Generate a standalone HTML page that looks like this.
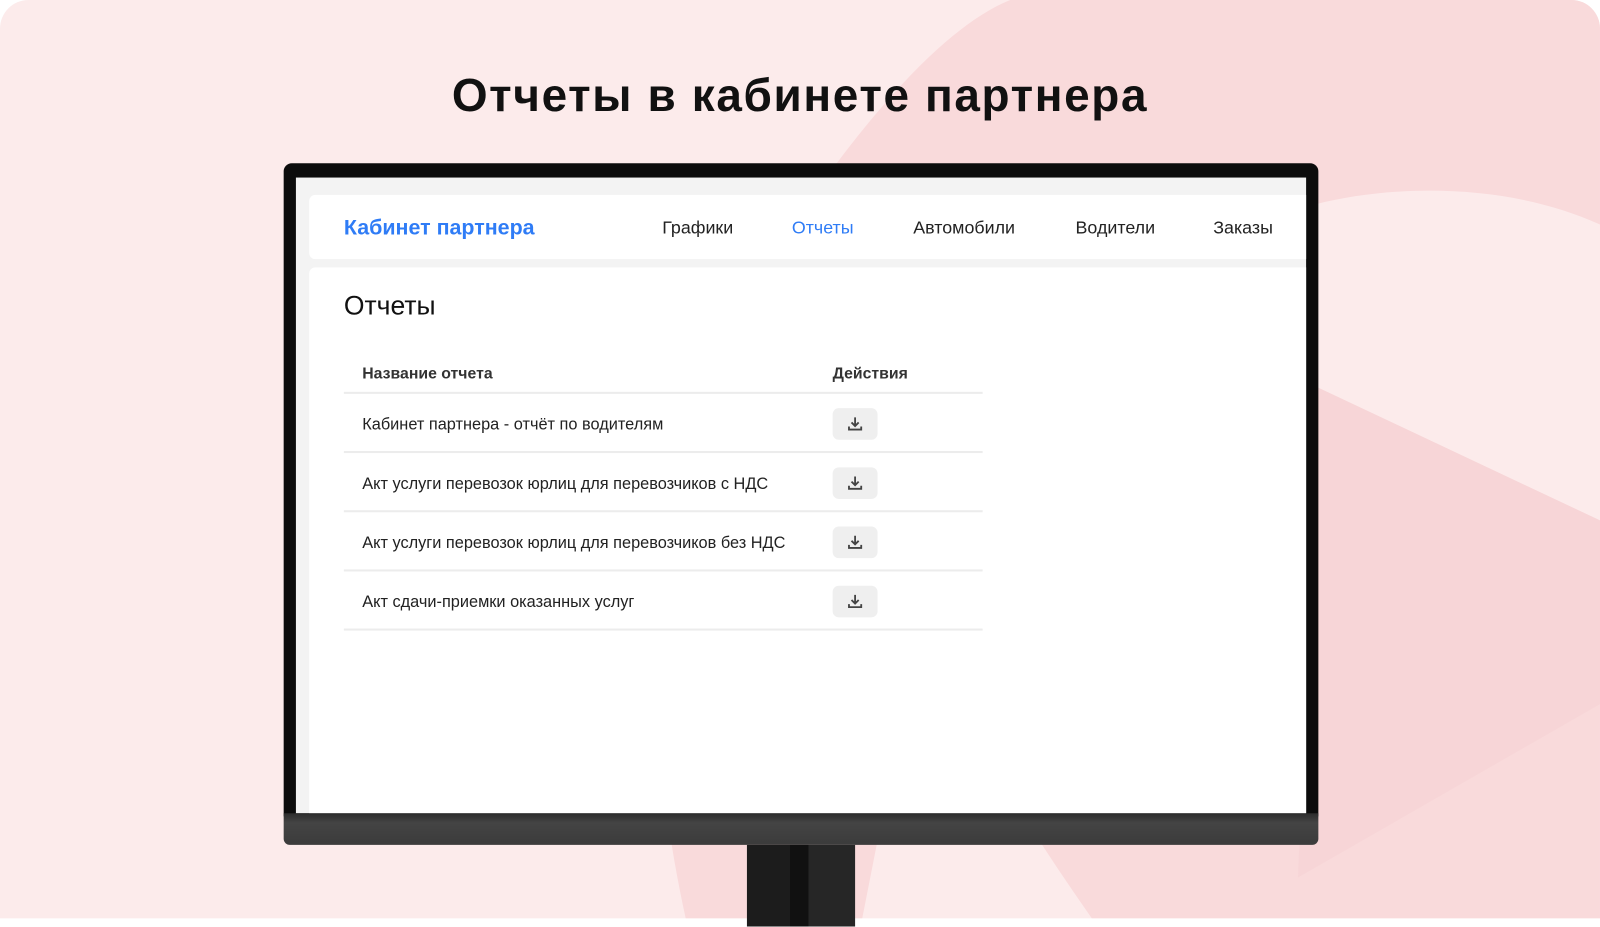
<!DOCTYPE html>
<html><head><meta charset="utf-8"><style>
*{margin:0;padding:0;box-sizing:border-box}
body{width:1600px;height:899px;background:#fff;overflow:hidden;font-family:"Liberation Sans",Arial,sans-serif;position:relative}
.wrap{position:absolute;left:0;top:0;width:1568px;height:881px;transform:scale(1.0204);transform-origin:0 0}
.bg{position:absolute;left:0;top:0;width:1568px;height:900px;border-radius:28px 28px 0 0;background:#fcebeb;overflow:hidden}
h1{position:absolute;top:68px;left:0;width:1568px;text-align:center;font-size:45px;font-weight:bold;color:#111;letter-spacing:1.6px}
.bezel{position:absolute;left:278px;top:160px;width:1014px;height:640px;background:#0c0c0c;border-radius:8px 8px 0 0}
.screen{position:absolute;left:290px;top:174px;width:990px;height:623px;background:#f3f3f3}
.chin{position:absolute;left:278px;top:797px;width:1014px;height:31px;background:linear-gradient(#2c2c2c,#444 30%,#3b3b3b);border-radius:0 0 6px 6px}
.stand{position:absolute;left:732px;top:828px;width:106px;height:80px;background:linear-gradient(90deg,#1c1c1c 0,#1c1c1c 40%,#111 40%,#111 57%,#262626 57%)}
.hdr{position:absolute;left:303px;top:191px;width:977px;height:63px;background:#fff;border-radius:6px 0 0 6px}
.logo{position:absolute;left:34px;top:21px;color:#2f7cf6;font-size:21px;font-weight:bold}
.nav{position:absolute;top:22px;font-size:17.5px;color:#222}
.card{position:absolute;left:303px;top:262px;width:977px;height:535px;background:#fff;border-radius:6px 0 0 0}
.ct{position:absolute;left:34px;top:22px;font-size:26px;color:#111}
.tbl{position:absolute;left:34px;top:86px;width:626px}
.row{height:58px;border-bottom:2px solid #ececec;position:relative;font-size:16px;color:#222}
.row.h{height:38px;font-weight:bold;color:#333;font-size:15.5px}
.row span{position:absolute;left:18px;top:22px}
.row.h span{top:10px}
.row .a{left:479px}
.btn{position:absolute;left:479px;top:14px;width:44px;height:31px;background:#efefef;border-radius:6px}
.btn svg{position:absolute;left:14px;top:7px}
</style></head><body>
<div class="wrap">
<div class="bg">
<svg width="1568" height="900" style="position:absolute;left:0;top:0">
<path d="M820 160 C880 80 940 20 990 0 L1568 0 L1568 220 C1480 180 1370 180 1290 200 L1292 380 L1568 510 L1568 900 L1070 900 C1000 800 940 700 900 620 L845 900 L672 900 C650 800 640 700 640 560 Z" fill="#f9dadb"/>
<path d="M1292 380 L1568 510 L1568 690 L1272 860 Z" fill="#f7d3d5" opacity="0.7"/>
</svg>
</div>
<h1>Отчеты в кабинете партнера</h1>
<div class="bezel"></div>
<div class="screen"></div>
<div class="hdr">
<div class="logo">Кабинет партнера</div>
<div class="nav" style="left:346px">Графики</div>
<div class="nav" style="left:473px;color:#2f7cf6">Отчеты</div>
<div class="nav" style="left:592px">Автомобили</div>
<div class="nav" style="left:751px">Водители</div>
<div class="nav" style="left:886px">Заказы</div>
</div>
<div class="card">
<div class="ct">Отчеты</div>
<div class="tbl">
<div class="row h"><span>Название отчета</span><span class="a">Действия</span></div>
<div class="row"><span>Кабинет партнера - отчёт по водителям</span><div class="btn"><svg width="16" height="16" viewBox="0 0 16 16"><path d="M8 2v8M4.5 7l3.5 3.5L11.5 7M2 11v3h12v-3" fill="none" stroke="#444" stroke-width="1.8"/></svg></div></div>
<div class="row"><span>Акт услуги перевозок юрлиц для перевозчиков с НДС</span><div class="btn"><svg width="16" height="16" viewBox="0 0 16 16"><path d="M8 2v8M4.5 7l3.5 3.5L11.5 7M2 11v3h12v-3" fill="none" stroke="#444" stroke-width="1.8"/></svg></div></div>
<div class="row"><span>Акт услуги перевозок юрлиц для перевозчиков без НДС</span><div class="btn"><svg width="16" height="16" viewBox="0 0 16 16"><path d="M8 2v8M4.5 7l3.5 3.5L11.5 7M2 11v3h12v-3" fill="none" stroke="#444" stroke-width="1.8"/></svg></div></div>
<div class="row"><span>Акт сдачи-приемки оказанных услуг</span><div class="btn"><svg width="16" height="16" viewBox="0 0 16 16"><path d="M8 2v8M4.5 7l3.5 3.5L11.5 7M2 11v3h12v-3" fill="none" stroke="#444" stroke-width="1.8"/></svg></div></div>
</div>
</div>
<div class="chin"></div>
<div class="stand"></div>
</div>
</body></html>
